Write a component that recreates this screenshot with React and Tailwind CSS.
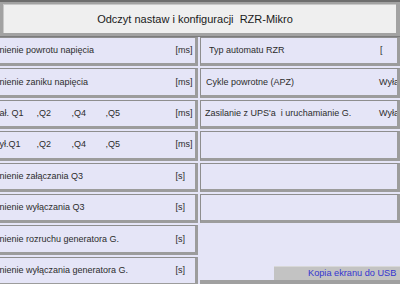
import React from "react";

const box =
  "h-[29.4px] shrink-0 bg-[#e5e5f7] border-t-[1.5px] border-l-[1.5px] border-r-[3px] border-b-[3px] border-t-[#8e8e8e] border-l-[#8e8e8e] border-r-[#9c9c9c] border-b-[#9c9c9c] flex items-center overflow-hidden whitespace-nowrap";

function LeftRow({ children, unit }) {
  return (
    <div className={box + " pl-[1.5px]"}>
      <div className="w-[175px] shrink-0 overflow-hidden">{children}</div>
      <div className="ml-[1px]">{unit}</div>
    </div>
  );
}

function QRow({ first }) {
  return (
    <div className={box + " pl-[1.5px]"}>
      <div className="w-[175px] shrink-0 flex">
        <span className="w-[37px]">{first}</span>
        <span className="w-[35px]">,Q2</span>
        <span className="w-[34px]">,Q4</span>
        <span>,Q5</span>
      </div>
      <div className="ml-[1px]">[ms]</div>
    </div>
  );
}

function RightRow({ label, value, lw, pl }) {
  return (
    <div className={box + " " + pl}>
      <div className={lw + " shrink-0 overflow-hidden"}>{label}</div>
      <div className="shrink-0">{value}</div>
    </div>
  );
}

export default function App() {
  return (
    <div className="w-[400px] h-[284px] overflow-hidden bg-[#e5e5f7] font-['Liberation_Sans',Arial,sans-serif] text-[9px] leading-none text-[#2c2c2c]">
      <header className="h-[37px] bg-[#a2a2a2] border-t-2 border-t-[#6e6e6e] border-b border-b-[#7c7c7c] pl-[3px] pr-[4px] pt-[2px] pb-[3px]">
        <div className="h-full bg-[#efefef] border-t border-l border-[#c8c8c8] flex items-center justify-center pr-[10px] text-[11px] text-[#1a1a1a] whitespace-pre">
          Odczyt nastaw i konfiguracji  RZR-Mikro
        </div>
      </header>
      <div className="flex">
        <div className="ml-[-3px] w-[201px] shrink-0 flex flex-col gap-[2px]">
          <LeftRow unit="[ms]">nienie powrotu napięcia</LeftRow>
          <LeftRow unit="[ms]">nienie zaniku napięcia</LeftRow>
          <QRow first="ał. Q1" />
          <QRow first="ył.Q1" />
          <LeftRow unit="[s]">nienie załączania  Q3</LeftRow>
          <LeftRow unit="[s]">nienie wyłączania Q3</LeftRow>
          <LeftRow unit="[s]">nienie rozruchu generatora G.</LeftRow>
          <LeftRow unit="[s]">nienie wyłączania generatora G.</LeftRow>
        </div>
        <div className="ml-[2px] flex-1 min-w-0 flex flex-col gap-[2px] h-[247px]">
          <RightRow pl="pl-[8px]" lw="w-[171px]" label="Typ automatu RZR" value="[" />
          <RightRow pl="pl-[5px]" lw="w-[173px]" label="Cykle powrotne (APZ)" value="Wyłączone" />
          <RightRow pl="pl-[4px]" lw="w-[174px]" label={"Zasilanie z UPS'a\u00a0 i uruchamianie G."} value="Wyłączone" />
          <div className={box} />
          <div className={box} />
          <div className={box} />
          <div className="flex-1 flex flex-col justify-end border-b-[4px] border-b-[#a0a0a0]">
            <div className="ml-[74px] h-[14px] bg-[#c3c3c3] border-t border-t-[#d8d8d8] flex items-center pl-[34px] whitespace-nowrap text-[9.2px] text-[#3434d0]">
              Kopia ekranu do USB
            </div>
          </div>
        </div>
      </div>
    </div>
  );
}
